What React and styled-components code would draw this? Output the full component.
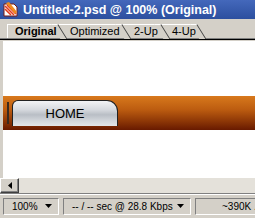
import React from 'react';
import styled, { createGlobalStyle } from 'styled-components';

const GlobalStyle = createGlobalStyle`
  html, body {
    margin: 0;
    padding: 0;
    background: #d4d0c8;
  }
  body {
    font-family: "Liberation Sans", Arial, sans-serif;
  }
`;

const Window = styled.div`
  width: 255px;
  height: 218px;
  display: flex;
  flex-direction: column;
  background: #d4d0c8;
  overflow: hidden;
`;

const TitleBar = styled.div`
  height: 19px;
  flex: 0 0 19px;
  display: flex;
  align-items: center;
  gap: 4px;
  padding-left: 3px;
  background: linear-gradient(180deg, #4468bb 0%, #2c4f9f 100%);
`;

const TitleText = styled.span`
  color: #fff;
  font-family: "Liberation Sans", Arial, sans-serif;
  font-weight: bold;
  font-size: 12.5px;
  white-space: nowrap;
`;

const TabStrip = styled.div`
  height: 19px;
  flex: 0 0 19px;
  display: flex;
  align-items: flex-end;
  padding-left: 7px;
  border-bottom: 1px solid #808080;
  box-shadow: 0 1px 0 #000;
  margin-bottom: 2px;
`;

const Tab = styled.div`
  position: relative;
  z-index: ${p => (p.$active ? 9 : 8 - p.$index)};
  box-sizing: border-box;
  width: ${p => p.$w}px;
  height: 14px;
  line-height: 13px;
  padding-left: ${p => p.$pl}px;
  background: #d4d0c8;
  border-top: 1px solid #fff;
  border-left: ${p => (p.$first ? '1px solid #fff' : 'none')};
  font-family: "Liberation Sans", Arial, sans-serif;
  font-size: 11px;
  font-weight: ${p => (p.$active ? 'bold' : 'normal')};
  color: #000;
  white-space: nowrap;
  &::after {
    content: '';
    position: absolute;
    top: -1px;
    left: calc(100% - 6px);
    width: 6px;
    height: 14px;
    background: #d4d0c8;
    border-top: 1px solid #fff;
    border-right: 1px solid #404040;
    transform: skewX(32deg);
    transform-origin: top left;
    z-index: -1;
  }
`;

const Canvas = styled.div`
  flex: 1;
  background: #fff;
  margin-left: 3px;
  display: flex;
  flex-direction: column;
  padding-top: 55px;
`;

const NavBar = styled.div`
  height: 34px;
  display: flex;
  align-items: flex-end;
  gap: 3px;
  padding-left: 4px;
  background: linear-gradient(180deg, #d8791c 0%, #bc5c10 40%, #8c3606 75%, #681a00 100%);
`;

const Divider = styled.div`
  width: 2px;
  height: 22px;
  margin-bottom: 6px;
  background: #3a2a20;
`;

const NavButton = styled.div`
  width: 106px;
  height: 26px;
  margin-bottom: 4px;
  display: flex;
  align-items: center;
  justify-content: center;
  box-sizing: border-box;
  border: 1px solid #222;
  border-bottom: none;
  border-radius: 6px 11px 0 0;
  background: linear-gradient(180deg, #f2f3f5 0%, #d6d9de 35%, #b9bec5 55%, #d3d7dc 80%, #e3e6e9 100%);
  font-family: "Liberation Sans", Arial, sans-serif;
  font-size: 13px;
  color: #000;
`;

const ScrollBar = styled.div`
  height: 15px;
  flex: 0 0 15px;
  display: flex;
  background: #d4d0c8;
`;

const ArrowButton = styled.div`
  width: 19px;
  height: 15px;
  box-sizing: border-box;
  display: flex;
  align-items: center;
  justify-content: center;
  border: 1px solid;
  border-color: #fff #404040 #404040 #fff;
  box-shadow: inset -1px -1px 0 #808080;
  background: #d4d0c8;
`;

const Track = styled.div`
  flex: 1;
  background: #e4e1da;
`;

const StatusBar = styled.div`
  height: 24px;
  flex: 0 0 24px;
  display: flex;
  align-items: center;
  gap: 4px;
  padding: 0 0 0 3px;
  border-top: 1px solid #808080;
  box-shadow: inset 0 1px 0 #fff;
`;

const Field = styled.div`
  width: ${p => p.$w}px;
  flex: 0 0 auto;
  height: 17px;
  box-sizing: border-box;
  display: flex;
  align-items: center;
  justify-content: ${p => p.$align || 'space-between'};
  padding: 0 6px 0 ${p => p.$pl || 8}px;
  border: 1px solid;
  border-color: #808080 #fff #fff #808080;
  font-family: "Liberation Sans", Arial, sans-serif;
  font-size: 10px;
  color: #000;
  white-space: nowrap;
`;

const Caret = () => (
  <svg width="7" height="4" viewBox="0 0 7 4">
    <path d="M0 0h7L3.5 4z" fill="#000" />
  </svg>
);

const PsdIcon = () => (
  <svg width="16" height="15" viewBox="0 0 16 15">
    <path d="M1 2h10l3 3v9H1z" fill="#fff" stroke="#7a1a10" strokeWidth="1" />
    <path d="M2 4l9 9M2 7l6 6M4 3l9 9" stroke="#e23a1a" strokeWidth="1.6" />
    <path d="M3 1l3 -1 8 10-2 2z" fill="#f08a20" />
  </svg>
);

const tabs = [
  { label: 'Original', w: 50, pl: 7 },
  { label: 'Optimized', w: 64, pl: 13 },
  { label: '2-Up', w: 39, pl: 13 },
  { label: '4-Up', w: 36, pl: 12 },
];

export default function App() {
  return (
    <>
      <GlobalStyle />
      <Window>
        <TitleBar>
          <PsdIcon />
          <TitleText>Untitled-2.psd @ 100% (Original)</TitleText>
        </TitleBar>
        <TabStrip>
          {tabs.map((t, i) => (
            <Tab key={t.label} $index={i} $first={i === 0} $active={i === 0} $w={t.w} $pl={t.pl}>
              {t.label}
            </Tab>
          ))}
        </TabStrip>
        <Canvas>
          <NavBar>
            <Divider />
            <NavButton>HOME</NavButton>
          </NavBar>
        </Canvas>
        <ScrollBar>
          <ArrowButton>
            <svg width="4" height="7" viewBox="0 0 4 7">
              <path d="M4 0v7L0 3.5z" fill="#000" />
            </svg>
          </ArrowButton>
          <Track />
        </ScrollBar>
        <StatusBar>
          <Field $w={56}>
            100% <Caret />
          </Field>
          <Field $w={128}>
            -- / -- sec @ 28.8 Kbps <Caret />
          </Field>
          <Field $w={70} $align="flex-start" $pl={26}>
            ~390K ...
          </Field>
        </StatusBar>
      </Window>
    </>
  );
}
